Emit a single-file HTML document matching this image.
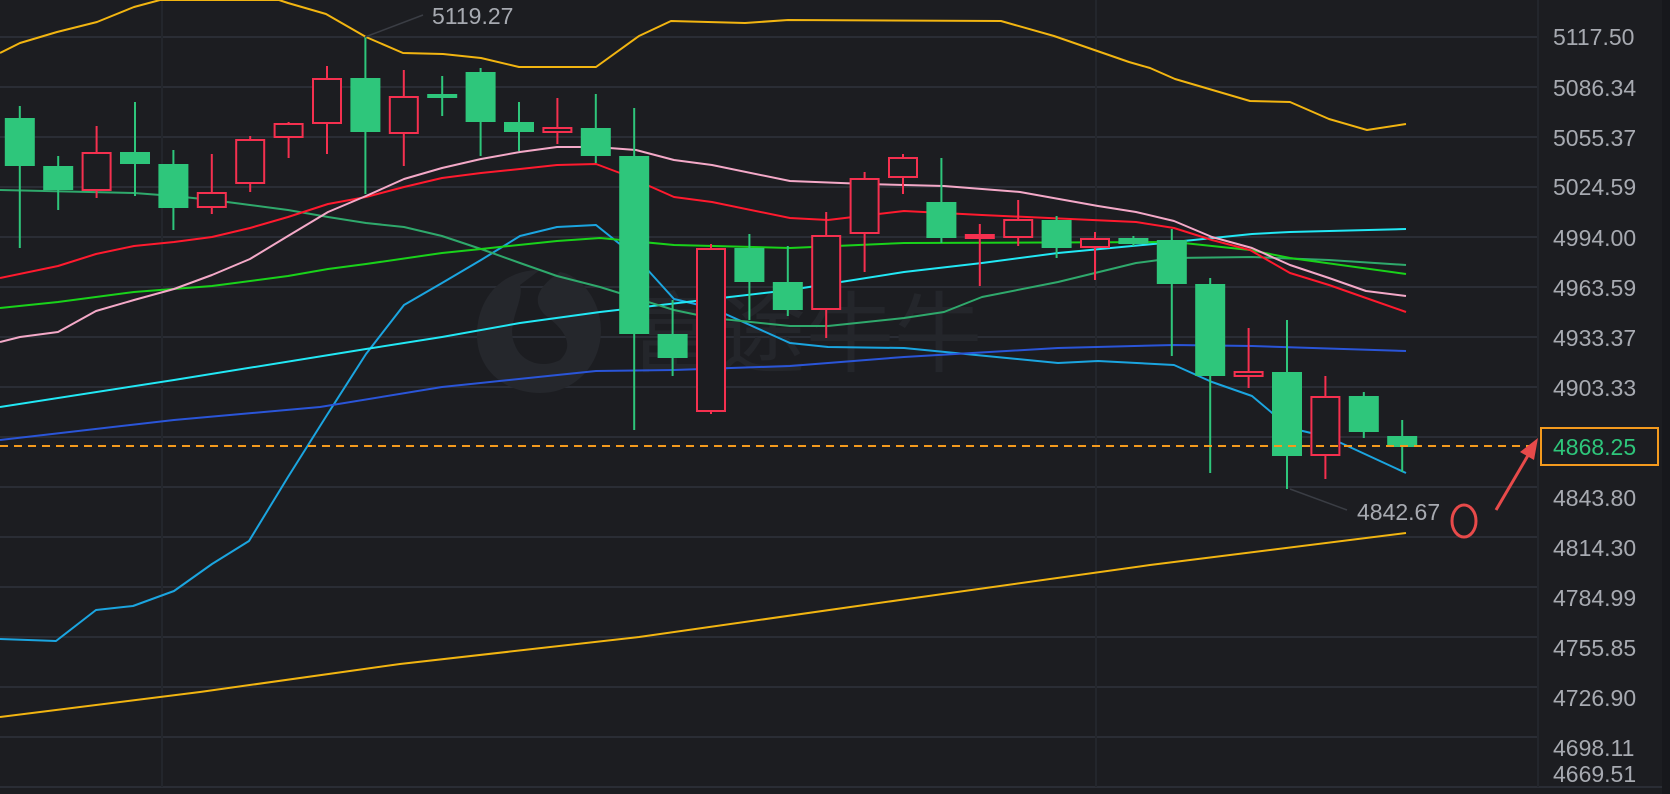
<!DOCTYPE html>
<html><head><meta charset="utf-8"><style>
html,body{margin:0;padding:0;background:#1c1d21;}
svg{display:block}
.lbl{font-family:"Liberation Sans",sans-serif;font-size:23px;fill:#a7aab1;}
</style></head><body>
<svg width="1670" height="794" viewBox="0 0 1670 794" xmlns="http://www.w3.org/2000/svg">
<rect width="1670" height="794" fill="#1c1d21"/>
<rect x="1662" y="0" width="8" height="794" fill="#17181c"/>
<!-- grid -->
<g stroke="#2a2d35" stroke-width="2">
<line x1="0" y1="37" x2="1538" y2="37"/><line x1="0" y1="87" x2="1538" y2="87"/>
<line x1="0" y1="137" x2="1538" y2="137"/><line x1="0" y1="187" x2="1538" y2="187"/>
<line x1="0" y1="237" x2="1538" y2="237"/><line x1="0" y1="287" x2="1538" y2="287"/>
<line x1="0" y1="337" x2="1538" y2="337"/><line x1="0" y1="387" x2="1538" y2="387"/>
<line x1="0" y1="437" x2="1538" y2="437"/><line x1="0" y1="487" x2="1538" y2="487"/>
<line x1="0" y1="537" x2="1538" y2="537"/><line x1="0" y1="587" x2="1538" y2="587"/>
<line x1="0" y1="637" x2="1538" y2="637"/><line x1="0" y1="687" x2="1538" y2="687"/>
<line x1="0" y1="737" x2="1538" y2="737"/><line x1="0" y1="787" x2="1662" y2="787"/>
</g>
<g stroke="#23262c" stroke-width="2">
<line x1="162" y1="0" x2="162" y2="787"/><line x1="1096" y1="0" x2="1096" y2="787"/>
<line x1="1538" y1="0" x2="1538" y2="787"/>
</g>
<!-- watermark -->
<g fill="#25272c">
<path d="M540 270 C500 270 477 300 477 335 C477 370 505 393 540 393 C575 393 601 365 601 330 C601 300 580 275 560 272 C540 285 530 300 545 315 C565 330 575 345 560 360 C540 370 520 360 515 345 C505 325 525 300 520 285 Z"/>
</g>
<text x="630" y="365" font-family="'Noto Sans CJK SC',sans-serif" font-size="88" fill="#24262b">富途牛牛</text>
<!-- bands & MAs -->
<g fill="none" stroke-width="2" stroke-linejoin="round">
<polyline stroke="#f2b511" points="0,53 20,43 57,32 97,22 134,7 160,0 279,0 288,3 326,14 366,37 403,53 443,54 481,58 519,67 596,67 639,36 671,21 745,23 788,20 1001,21 1054,36 1129,62 1150,68 1175,79 1250,101 1290,102 1329,119 1367,130 1406,124"/>
<polyline stroke="#f2b511" points="0,717 200,692 400,664 639,637 900,600 1150,565 1406,533"/>
<polyline stroke="#1ba5e0" points="0,639 56,641 96,610 133,606 174,591 212,564 249,541 288,477 327,415 366,354 404,305 442,283 481,260 520,236 557,227 596,225 636,257 674,299 712,308 790,343 828,347 904,348 1058,363 1098,361 1174,365 1212,382 1252,396 1290,428 1328,437 1406,473"/>
<polyline stroke="#2a55d8" points="0,440 174,420 320,407 442,387 596,371 674,370 790,366 904,357 1058,348 1174,345 1252,346 1406,351"/>
<polyline stroke="#22e8f5" points="0,407 174,380 366,349 442,337 520,323 600,312 790,290 904,272 982,263 1058,253 1174,242 1252,234 1290,232 1406,229"/>
<polyline stroke="#2fa96c" points="0,190 134,193 174,196 212,200 250,205 288,210 328,217 366,223 404,227 442,236 481,249 520,263 557,276 600,287 674,310 712,318 790,326 828,326 904,318 944,312 982,297 1058,282 1136,263 1174,258 1252,257 1329,260 1406,265"/>
<polyline stroke="#19d21a" points="0,308 58,302 134,292 212,286 288,276 328,269 366,264 442,253 481,249 557,241 600,238 674,245 790,248 904,243 1174,242 1250,250 1290,258 1406,274"/>
<polyline stroke="#ff1a2e" points="0,278 58,266 96,254 134,246 174,242 212,237 250,228 288,217 328,204 366,197 404,187 442,178 481,173 520,169 557,165 596,164 620,173 674,197 712,202 790,218 828,220 904,211 982,215 1136,222 1174,228 1212,240 1250,250 1290,273 1329,285 1366,298 1406,312"/>
<polyline stroke="#f4a9c8" points="0,342 20,337 58,332 96,311 134,300 174,289 212,275 250,259 288,236 328,212 366,196 404,179 442,168 481,159 520,152 557,147 596,147 636,150 674,160 712,165 790,181 866,184 944,186 1020,192 1098,206 1136,212 1174,221 1212,237 1252,248 1290,265 1329,278 1366,291 1406,296"/>
</g>
<!-- candles -->
<g stroke-width="2">
<g stroke="#2ec67b" fill="#2ec67b">
<line x1="19.8" y1="106" x2="19.8" y2="248"/><rect x="4.8" y="118" width="30" height="48" stroke="none"/>
<line x1="58.2" y1="156" x2="58.2" y2="210"/><rect x="43.2" y="166" width="30" height="24" stroke="none"/>
<line x1="135" y1="102" x2="135" y2="196"/><rect x="120" y="152" width="30" height="12" stroke="none"/>
<line x1="173.4" y1="150" x2="173.4" y2="230"/><rect x="158.4" y="164" width="30" height="44" stroke="none"/>
<line x1="365.4" y1="37" x2="365.4" y2="194"/><rect x="350.4" y="78" width="30" height="54" stroke="none"/>
<line x1="442.2" y1="76" x2="442.2" y2="116"/><rect x="427.2" y="94" width="30" height="4" stroke="none"/>
<line x1="480.6" y1="68" x2="480.6" y2="156"/><rect x="465.6" y="72" width="30" height="50" stroke="none"/>
<line x1="519" y1="102" x2="519" y2="151"/><rect x="504" y="122" width="30" height="10" stroke="none"/>
<line x1="595.8" y1="94" x2="595.8" y2="163"/><rect x="580.8" y="128" width="30" height="28" stroke="none"/>
<line x1="634.2" y1="108" x2="634.2" y2="430"/><rect x="619.2" y="156" width="30" height="178" stroke="none"/>
<line x1="672.6" y1="300" x2="672.6" y2="376"/><rect x="657.6" y="334" width="30" height="24" stroke="none"/>
<line x1="749.4" y1="234" x2="749.4" y2="320"/><rect x="734.4" y="248" width="30" height="34" stroke="none"/>
<line x1="787.8" y1="246" x2="787.8" y2="316"/><rect x="772.8" y="282" width="30" height="28" stroke="none"/>
<line x1="941.4" y1="158" x2="941.4" y2="243"/><rect x="926.4" y="202" width="30" height="36" stroke="none"/>
<line x1="1056.6" y1="216" x2="1056.6" y2="258"/><rect x="1041.6" y="220" width="30" height="28" stroke="none"/>
<line x1="1133.4" y1="236" x2="1133.4" y2="246"/><rect x="1118.4" y="238" width="30" height="6" stroke="none"/>
<line x1="1171.8" y1="229" x2="1171.8" y2="356"/><rect x="1156.8" y="240" width="30" height="44" stroke="none"/>
<line x1="1210.2" y1="278" x2="1210.2" y2="473"/><rect x="1195.2" y="284" width="30" height="92" stroke="none"/>
<line x1="1287" y1="320" x2="1287" y2="489"/><rect x="1272" y="372" width="30" height="84" stroke="none"/>
<line x1="1363.8" y1="392" x2="1363.8" y2="438"/><rect x="1348.8" y="396" width="30" height="36" stroke="none"/>
<line x1="1402.2" y1="420" x2="1402.2" y2="472"/><rect x="1387.2" y="436" width="30" height="11" stroke="none"/>
</g>
<g stroke="#f5304f" fill="#1c1d21">
<line x1="96.6" y1="126" x2="96.6" y2="198"/><rect x="82.6" y="153" width="28" height="37"/>
<line x1="211.8" y1="154" x2="211.8" y2="214"/><rect x="197.8" y="193" width="28" height="14"/>
<line x1="250.2" y1="136" x2="250.2" y2="192"/><rect x="236.2" y="140" width="28" height="43"/>
<line x1="288.6" y1="122" x2="288.6" y2="158"/><rect x="274.6" y="124" width="28" height="13"/>
<line x1="327" y1="66" x2="327" y2="154"/><rect x="313" y="79" width="28" height="44"/>
<line x1="403.8" y1="70" x2="403.8" y2="166"/><rect x="389.8" y="97" width="28" height="36"/>
<line x1="557.4" y1="98" x2="557.4" y2="144"/><rect x="543.4" y="128" width="28" height="4"/>
<line x1="711" y1="244" x2="711" y2="414"/><rect x="697" y="249" width="28" height="162"/>
<line x1="826.2" y1="212" x2="826.2" y2="338"/><rect x="812.2" y="236" width="28" height="73"/>
<line x1="864.6" y1="172" x2="864.6" y2="272"/><rect x="850.6" y="179" width="28" height="54"/>
<line x1="903" y1="154" x2="903" y2="194"/><rect x="889" y="158" width="28" height="19"/>
<line x1="979.8" y1="224" x2="979.8" y2="286"/><rect x="965.8" y="235" width="28" height="3" fill="#f5304f"/>
<line x1="1018.2" y1="200" x2="1018.2" y2="246"/><rect x="1004.2" y="220" width="28" height="17"/>
<line x1="1095" y1="232" x2="1095" y2="280"/><rect x="1081" y="239" width="28" height="8"/>
<line x1="1248.6" y1="328" x2="1248.6" y2="388"/><rect x="1234.6" y="372" width="28" height="4"/>
<line x1="1325.4" y1="376" x2="1325.4" y2="479"/><rect x="1311.4" y="397" width="28" height="58"/>
</g>
</g>
<!-- price line -->
<line x1="0" y1="446" x2="1540" y2="446" stroke="#f39a1e" stroke-width="2" stroke-dasharray="8,6"/>
<!-- annotations -->
<line x1="365" y1="37" x2="423" y2="15" stroke="#3a3d44" stroke-width="1.5"/>
<text x="432" y="24" class="lbl">5119.27</text>
<line x1="1290" y1="489" x2="1347" y2="510" stroke="#3a3d44" stroke-width="1.5"/>
<text x="1357" y="520" class="lbl">4842.67</text>
<ellipse cx="1464" cy="521" rx="12" ry="16" fill="none" stroke="#e84a4a" stroke-width="3"/>
<line x1="1496" y1="510" x2="1530" y2="452" stroke="#e84a4a" stroke-width="3"/>
<path d="M1538 438 L1520 452 L1534 460 Z" fill="#e84a4a"/>
<!-- axis labels -->
<g class="lbl">
<text x="1553" y="45">5117.50</text><text x="1553" y="96">5086.34</text>
<text x="1553" y="146">5055.37</text><text x="1553" y="195">5024.59</text>
<text x="1553" y="246">4994.00</text><text x="1553" y="296">4963.59</text>
<text x="1553" y="346">4933.37</text><text x="1553" y="396">4903.33</text>
<text x="1553" y="506">4843.80</text><text x="1553" y="556">4814.30</text>
<text x="1553" y="606">4784.99</text><text x="1553" y="656">4755.85</text>
<text x="1553" y="706">4726.90</text><text x="1553" y="756">4698.11</text>
<text x="1553" y="782">4669.51</text>
</g>
<rect x="1541" y="428" width="117" height="37" fill="#1c1d21" stroke="#f39a1e" stroke-width="2"/>
<text x="1553" y="455" class="lbl" style="fill:#2ec67b">4868.25</text>
</svg>
</body></html>
